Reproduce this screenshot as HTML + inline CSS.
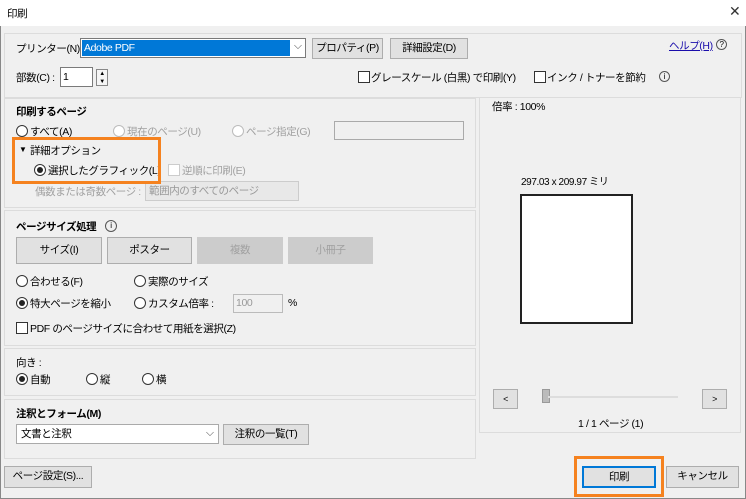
<!DOCTYPE html><html><head><meta charset="utf-8"><style>
*{box-sizing:border-box;margin:0;padding:0}
body{width:746px;height:499px;background:#f0f0f0;font-family:"Liberation Sans","Noto Sans CJK JP",sans-serif;font-size:10.5px;letter-spacing:-0.4px;color:#000;position:relative;overflow:hidden}
.a{position:absolute;white-space:nowrap}
.box{position:absolute;border:1px solid #dcdcdc;}
.btn{position:absolute;background:#e1e1e1;border:1px solid #adadad;text-align:center;line-height:19px}
.dis{color:#a0a0a0}
.r{position:absolute;width:12px;height:12px;border:1px solid #333;border-radius:50%;background:#fff}
.r.on::after{content:"";position:absolute;left:2px;top:2px;width:6px;height:6px;border-radius:50%;background:#222}
.r.d{border-color:#bbb}
.cb{position:absolute;width:12px;height:12px;border:1px solid #333;background:#fff}
.b{font-weight:bold}
.or{position:absolute;border:3px solid #f5821f}
</style></head><body>
<div class="a" style="left:0;top:0;width:746px;height:26px;background:#fff"></div>
<div class="a" style="left:7px;top:6px">印刷</div>
<div class="a" style="left:729px;top:3px;font-size:14px;color:#333">✕</div>
<div class="a" style="left:0;top:26px;width:1px;height:473px;background:#888"></div>
<div class="a" style="left:745px;top:26px;width:1px;height:473px;background:#888"></div>
<div class="a" style="left:0;top:498px;width:746px;height:1px;background:#888"></div>
<div class="box" style="left:4px;top:33px;width:738px;height:65px"></div>
<div class="a" style="left:16px;top:41px">プリンター(N) :</div>
<div class="a" style="left:80px;top:38px;width:226px;height:20px;background:#fff;border:1px solid #7a7a7a"></div>
<div class="a" style="left:82px;top:40px;width:208px;height:16px;background:#0078d7;color:#fff;padding-left:2px;line-height:16px">Adobe PDF</div>
<div class="a" style="left:294px;top:40px;color:#555">⌵</div>
<div class="btn" style="left:312px;top:38px;width:71px;height:21px">プロパティ(P)</div>
<div class="btn" style="left:390px;top:38px;width:78px;height:21px">詳細設定(D)</div>
<div class="a" style="left:669px;top:38px;color:#1a0dab;text-decoration:underline">ヘルプ(H)</div>
<div class="a" style="left:716px;top:39px;width:11px;height:11px;border:1px solid #555;border-radius:50%;font-size:8px;text-align:center;line-height:9px">?</div>
<div class="a" style="left:16px;top:70px">部数(C) :</div>
<div class="a" style="left:60px;top:67px;width:33px;height:20px;background:#fff;border:1px solid #7a7a7a;padding-left:2px;line-height:18px">1</div>
<div class="a" style="left:96px;top:69px;width:12px;height:17px;border:1px solid #888;background:#f5f5f5;font-size:6px;text-align:center;line-height:8px">▲<br>▼</div>
<div class="cb" style="left:358px;top:71px"></div>
<div class="a" style="left:371px;top:70px">グレースケール (白黒) で印刷(Y)</div>
<div class="cb" style="left:534px;top:71px"></div>
<div class="a" style="left:547px;top:70px">インク / トナーを節約</div>
<div class="a" style="left:659px;top:71px;width:11px;height:11px;border:1px solid #555;border-radius:50%;font-size:8px;text-align:center;line-height:9px">i</div>

<div class="box" style="left:4px;top:98px;width:472px;height:110px"></div>
<div class="a b" style="left:16px;top:104px">印刷するページ</div>
<div class="r" style="left:16px;top:125px"></div><div class="a" style="left:30px;top:124px">すべて(A)</div>
<div class="r d" style="left:113px;top:125px"></div><div class="a dis" style="left:127px;top:124px">現在のページ(U)</div>
<div class="r d" style="left:232px;top:125px"></div><div class="a dis" style="left:246px;top:124px">ページ指定(G)</div>
<div class="a" style="left:334px;top:121px;width:130px;height:19px;border:1px solid #aaa;background:#f0f0f0"></div>
<div class="a" style="left:19px;top:145px;font-size:8px">▼</div><div class="a" style="left:30px;top:143px">詳細オプション</div>
<div class="r on" style="left:34px;top:164px"></div><div class="a" style="left:48px;top:163px">選択したグラフィック(L)</div>
<div class="cb" style="left:168px;top:164px;border-color:#ccc"></div><div class="a dis" style="left:182px;top:163px">逆順に印刷(E)</div>
<div class="a dis" style="left:35px;top:184px">偶数または奇数ページ :</div>
<div class="a" style="left:145px;top:181px;width:154px;height:20px;border:1px solid #ccc;background:#e8e8e8;color:#999;padding-left:3px;line-height:18px">範囲内のすべてのページ</div>
<div class="or" style="left:12px;top:137px;width:149px;height:47px"></div>

<div class="box" style="left:4px;top:210px;width:472px;height:136px"></div>
<div class="a b" style="left:16px;top:219px">ページサイズ処理</div>
<div class="a" style="left:105px;top:220px;width:12px;height:12px;border:1px solid #555;border-radius:50%;font-size:8px;text-align:center;line-height:10px">i</div>
<div class="btn" style="left:16px;top:237px;width:86px;height:27px;line-height:25px">サイズ(I)</div>
<div class="btn" style="left:107px;top:237px;width:85px;height:27px;line-height:25px">ポスター</div>
<div class="btn dis" style="left:197px;top:237px;width:86px;height:27px;line-height:25px;background:#ccc;border-color:#ccc">複数</div>
<div class="btn dis" style="left:288px;top:237px;width:85px;height:27px;line-height:25px;background:#ccc;border-color:#ccc">小冊子</div>
<div class="r" style="left:16px;top:275px"></div><div class="a" style="left:30px;top:274px">合わせる(F)</div>
<div class="r" style="left:134px;top:275px"></div><div class="a" style="left:148px;top:274px">実際のサイズ</div>
<div class="r on" style="left:16px;top:297px"></div><div class="a" style="left:30px;top:296px">特大ページを縮小</div>
<div class="r" style="left:134px;top:297px"></div><div class="a" style="left:148px;top:296px">カスタム倍率 :</div>
<div class="a" style="left:233px;top:294px;width:50px;height:19px;border:1px solid #bbb;color:#999;padding-left:2px;line-height:17px">100</div>
<div class="a" style="left:288px;top:297px">%</div>
<div class="cb" style="left:16px;top:322px"></div><div class="a" style="left:30px;top:321px">PDF のページサイズに合わせて用紙を選択(Z)</div>

<div class="box" style="left:4px;top:348px;width:472px;height:48px"></div>
<div class="a" style="left:16px;top:355px">向き :</div>
<div class="r on" style="left:16px;top:373px"></div><div class="a" style="left:30px;top:372px">自動</div>
<div class="r" style="left:86px;top:373px"></div><div class="a" style="left:100px;top:372px">縦</div>
<div class="r" style="left:142px;top:373px"></div><div class="a" style="left:156px;top:372px">横</div>

<div class="box" style="left:4px;top:399px;width:472px;height:60px"></div>
<div class="a b" style="left:16px;top:406px">注釈とフォーム(M)</div>
<div class="a" style="left:16px;top:424px;width:203px;height:20px;background:#fff;border:1px solid #aaa;padding-left:4px;line-height:18px">文書と注釈</div>
<div class="a" style="left:206px;top:427px;color:#555">⌵</div>
<div class="btn" style="left:223px;top:424px;width:86px;height:21px">注釈の一覧(T)</div>

<div class="box" style="left:479px;top:97px;width:262px;height:336px"></div>
<div class="a" style="left:492px;top:99px">倍率 : 100%</div>
<div class="a" style="left:521px;top:173px;font-size:10px">297.03 x 209.97 ミリ</div>
<div class="a" style="left:520px;top:194px;width:113px;height:130px;background:#fff;border:2px solid #222"></div>
<div class="btn" style="left:493px;top:389px;width:25px;height:20px;line-height:18px;font-size:9px">&lt;</div>
<div class="a" style="left:542px;top:389px;width:8px;height:14px;background:#bbb;border:1px solid #999"></div>
<div class="a" style="left:548px;top:396px;width:130px;height:2px;background:#ddd"></div>
<div class="btn" style="left:702px;top:389px;width:25px;height:20px;line-height:18px;font-size:9px">&gt;</div>
<div class="a" style="left:578px;top:416px">1 / 1 ページ (1)</div>

<div class="btn" style="left:4px;top:466px;width:88px;height:22px">ページ設定(S)...</div>
<div class="btn" style="left:582px;top:466px;width:74px;height:22px;border:2px solid #0078d7;line-height:18px">印刷</div>
<div class="or" style="left:574px;top:456px;width:90px;height:41px"></div>
<div class="btn" style="left:666px;top:466px;width:73px;height:22px">キャンセル</div>
</body></html>
